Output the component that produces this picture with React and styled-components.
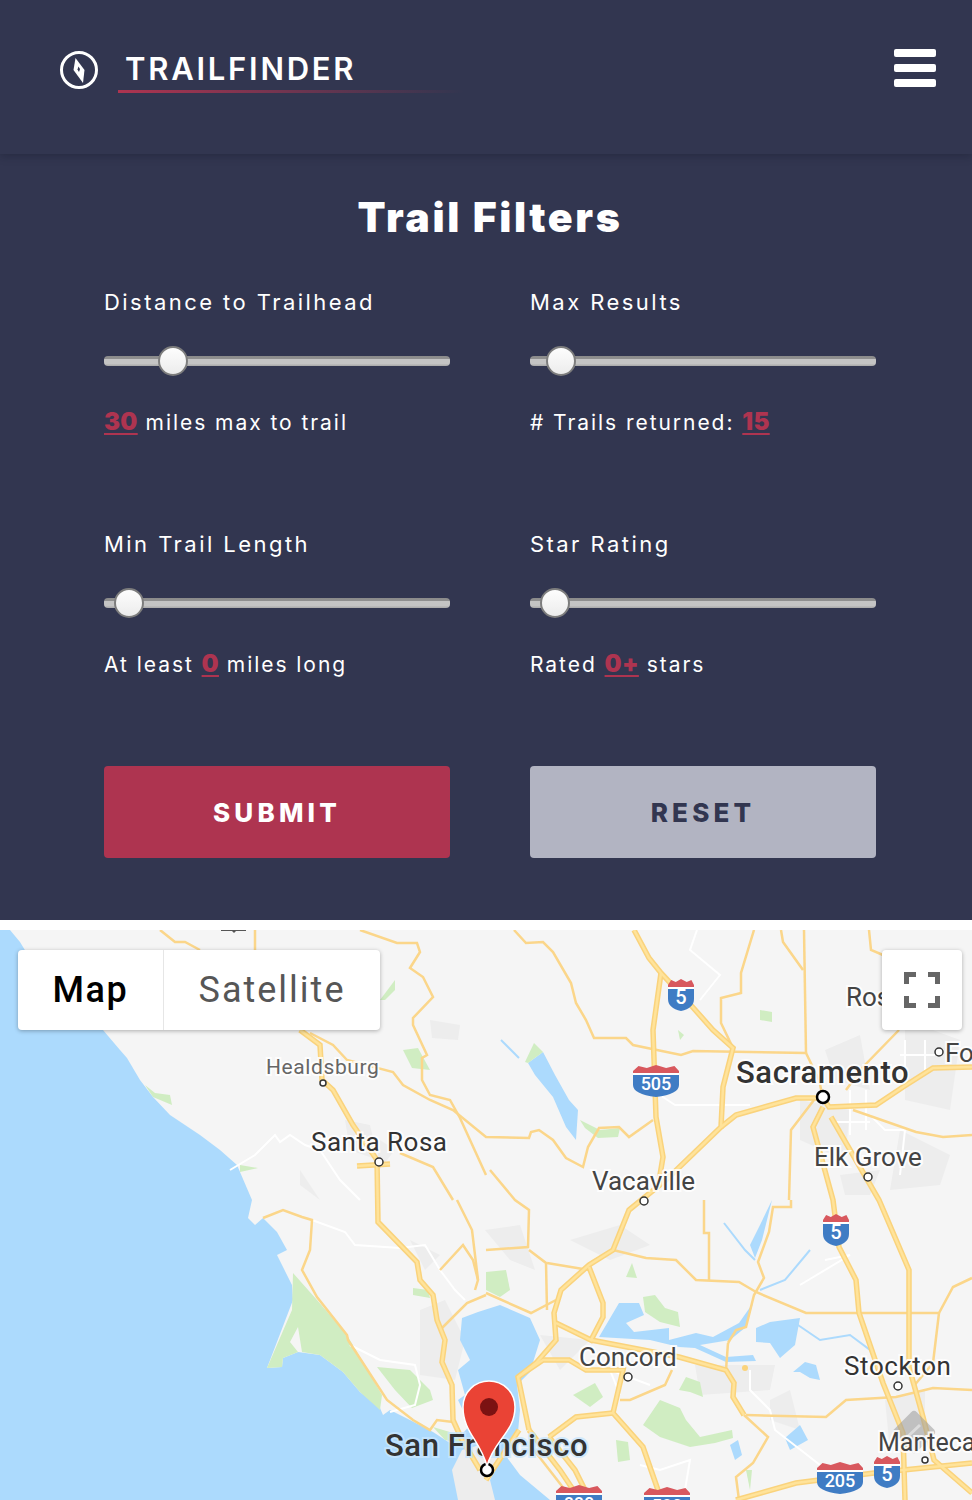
import React from 'react'
import styled, {createGlobalStyle} from 'styled-components'

const GlobalStyle = createGlobalStyle`
  * { box-sizing: border-box; }
  html, body { margin: 0; background: #fff; }
  body { font-family: Inter, "Liberation Sans", sans-serif; }
`

const Page = styled.div`
  width: 972px;
  height: 1500px;
  overflow: hidden;
  background: #fff;
`

const Header = styled.header`
  position: relative;
  z-index: 1;
  height: 154px;
  padding: 49px 36px 0 59px;
  display: flex;
  justify-content: space-between;
  align-items: flex-start;
  background: #323650;
  box-shadow: 0 2px 8px rgba(20, 22, 40, 0.35);
`

const Brand = styled.div`
  display: flex;
  align-items: flex-start;
`

const Compass = styled.svg`
  width: 40px;
  height: 40px;
  margin-right: 19px;
  flex: none;
`

const BrandText = styled.div`
  width: 345px;
  height: 44px;
  padding: 0 0 0 7px;
  border-bottom: 3px solid;
  border-image: linear-gradient(90deg, #ae3450, rgba(174, 52, 80, 0)) 1;
  color: #fff;
  font-size: 31px;
  font-weight: 600;
  line-height: 40px;
  letter-spacing: 2.75px;
`

const Burger = styled.div`
  display: flex;
  flex-direction: column;
  gap: 7.5px;
  width: 42px;
`

const BurgerBar = styled.span`
  display: block;
  height: 7.5px;
  border-radius: 2px;
  background: #fff;
`

const Panel = styled.section`
  height: 766px;
  padding: 38px 96px 0 104px;
  background: #323650;
`

const Title = styled.h1`
  margin: 0 0 48px;
  color: #fff;
  font-size: 41px;
  font-weight: 900;
  line-height: 50px;
  letter-spacing: 2.6px;
  text-align: center;
`

const FilterGrid = styled.div`
  display: grid;
  grid-template-columns: 346px 346px;
  column-gap: 80px;
  row-gap: 92px;
`

const Filter = styled.div`
  display: flex;
  flex-direction: column;
  height: 150px;
`

const Label = styled.div`
  color: #fff;
  font-size: 22px;
  font-weight: 400;
  line-height: 24px;
  letter-spacing: 2.45px;
`

const Slider = styled.input`
  -webkit-appearance: none;
  appearance: none;
  display: block;
  width: 346px;
  height: 30px;
  margin: 32px 0 0;
  background: transparent;

  &::-webkit-slider-runnable-track {
    height: 10px;
    border-radius: 4px;
    background: linear-gradient(#8b8b8b 0, #8f8f8f 25%, #c4c4c4 30%, #c4c4c4 75%, #a8a8a8 100%);
  }

  &::-webkit-slider-thumb {
    -webkit-appearance: none;
    width: 30px;
    height: 30px;
    margin-top: -10px;
    border: 2px solid #7d7d7d;
    border-radius: 50%;
    background: linear-gradient(#fdfdfd, #ececec);
  }
`

const Readout = styled.div`
  margin-top: 33px;
  color: #fff;
  font-size: 21px;
  line-height: 26px;
  letter-spacing: 1.95px;
  white-space: pre;
`

const Value = styled.span`
  color: #ae3450;
  font-size: 24px;
  font-weight: 900;
  letter-spacing: 0.3px;
  text-decoration: underline;
  text-decoration-thickness: 2px;
  text-underline-offset: 3px;
`

const Actions = styled.div`
  display: grid;
  grid-template-columns: 346px 346px;
  column-gap: 80px;
  margin-top: 84px;
`

const Button = styled.button`
  height: 92px;
  border: 0;
  border-radius: 4px;
  background: ${p => (p.$primary ? '#ae3450' : '#b2b4c2')};
  color: ${p => (p.$primary ? '#fff' : '#323650')};
  font-family: Inter, "Liberation Sans", sans-serif;
  font-size: 26px;
  font-weight: 800;
  letter-spacing: 4.2px;
`

const MapFrame = styled.div`
  position: relative;
  height: 570px;
  margin-top: 10px;
  overflow: hidden;
`

const MapCanvas = styled.svg`
  display: block;
  width: 972px;
  height: 570px;
`

const MapTypes = styled.div`
  position: absolute;
  top: 20px;
  left: 18px;
  display: flex;
  height: 80px;
  border-radius: 4px;
  background: #fff;
  box-shadow: 0 1px 4px rgba(0, 0, 0, 0.3);
`

const MapType = styled.div`
  display: flex;
  align-items: center;
  justify-content: center;
  width: ${p => p.$width}px;
  border-left: ${p => (p.$active ? '0' : '1px solid #e6e6e6')};
  color: ${p => (p.$active ? '#000' : '#565656')};
  font-family: Roboto, "Liberation Sans", sans-serif;
  font-size: 36px;
  font-weight: ${p => (p.$active ? 500 : 400)};
  letter-spacing: ${p => (p.$active ? 1.6 : 2)}px;
`

const Fullscreen = styled.div`
  position: absolute;
  top: 20px;
  right: 10px;
  display: flex;
  align-items: center;
  justify-content: center;
  width: 80px;
  height: 80px;
  border-radius: 4px;
  background: #fff;
  box-shadow: 0 1px 4px rgba(0, 0, 0, 0.3);
`

const PlaceLabel = styled.text`
  font-family: Roboto, "Liberation Sans", sans-serif;
  font-size: ${p => p.$size}px;
  font-weight: ${p => p.$weight || 400};
  letter-spacing: ${p => p.$spacing || 0}px;
  fill: ${p => p.$color || '#444'};
  stroke: ${p => p.$halo || 'rgba(255, 255, 255, 0.85)'};
  stroke-width: 4px;
  paint-order: stroke;
`

const ShieldNumber = styled.text`
  font-family: Roboto, "Liberation Sans", sans-serif;
  font-size: ${p => p.$size}px;
  font-weight: 500;
  fill: #fff;
  text-anchor: middle;
`

const filters = [
  {label: 'Distance to Trailhead', position: 171, text: [['value', '30'], ['text', ' miles max to trail']]},
  {label: 'Max Results', position: 50, text: [['text', '# Trails returned: '], ['value', '15']]},
  {label: 'Min Trail Length', position: 32, text: [['text', 'At least '], ['value', '0'], ['text', ' miles long']]},
  {label: 'Star Rating', position: 32, text: [['text', 'Rated '], ['value', '0+'], ['text', ' stars']]},
]

const water = [
  '0,930 10,930 20,942 40,975 103,1030 120,1050 127,1058 140,1080 153,1097 170,1115 200,1135 220,1150 237,1165 240,1172 252,1200 248,1218 255,1225 263,1218 277,1232 287,1250 277,1255 292,1285 293,1300 267,1368 282,1367 283,1358 298,1352 320,1355 343,1372 360,1392 380,1408 383,1415 390,1410 410,1420 433,1432 453,1445 470,1425 458,1400 465,1395 458,1370 470,1360 460,1340 462,1318 478,1312 500,1305 530,1318 540,1340 530,1372 517,1385 520,1410 518,1432 503,1452 520,1475 550,1500 0,1500',
  '599,1337 619,1303 639,1303 644,1315 626,1323 634,1332 669,1328 669,1340 696,1333 713,1337 739,1323 753,1303 746,1327 730,1340 700,1345 726,1357 753,1355 756,1361 726,1362 695,1348 679,1347 650,1340',
  '756,1328 770,1322 800,1318 795,1345 780,1358 770,1343 756,1342',
  '772,1200 762,1240 755,1258 750,1245 760,1225',
  '543,1052 528,1063 535,1075 553,1097 566,1127 576,1140 578,1110 569,1100 555,1075',
  '793,1372 805,1362 816,1365 820,1380 810,1378 800,1372',
  '785,1438 800,1425 808,1440 790,1450',
  '730,1445 738,1440 742,1455 735,1460',
]

const waterLines = [
  '724,1223 745,1250 755,1260',
  '810,1250 785,1280 760,1290',
  '795,1323 820,1340 850,1335 870,1350 880,1375',
  '501,1040 519,1058',
]

const green = [
  '293,1273 317,1300 347,1335 382,1395 380,1410 360,1392 343,1372 320,1355 302,1352 298,1327 290,1342 298,1352 283,1358 282,1367 267,1368 292,1310',
  '145,1085 153,1097 172,1105 170,1095 155,1093',
  '240,1165 258,1168 240,1172',
  '380,1000 395,980 395,990 385,1000',
  '403,1050 418,1048 430,1070 412,1068',
  '377,1367 410,1370 430,1390 433,1400 412,1408 395,1390',
  '433,1427 460,1435 467,1445 445,1440',
  '486,1272 506,1270 510,1290 500,1297 486,1290',
  '413,1288 428,1290 430,1298 413,1295',
  '643,1297 655,1295 665,1308 678,1312 680,1327 660,1322 645,1312',
  '626,1277 632,1263 637,1278',
  '573,1395 595,1383 603,1397 590,1407',
  '679,1390 686,1377 700,1382 703,1397 690,1392',
  '643,1425 660,1400 680,1408 686,1420 700,1437 732,1430 733,1438 715,1443 690,1447 660,1437',
  '616,1440 628,1442 630,1460 618,1462',
  '760,1010 772,1012 772,1022 760,1020',
  '534,1043 543,1052 528,1063 525,1062',
  '580,1120 600,1130 620,1128 618,1137 598,1138 585,1128',
  '746,1470 752,1470 750,1490',
  '680,1040 678,1030 684,1035',
]

const gray = [
  '430,1020 460,1025 458,1040 432,1038',
  '345,1120 370,1125 378,1160 350,1150',
  '300,1170 320,1200 300,1185',
  '380,1140 395,1150 375,1175',
  '420,1310 445,1300 465,1340 455,1380 420,1375',
  '410,1240 440,1255 425,1270',
  '485,1230 520,1225 535,1270 510,1260',
  '570,1240 620,1225 650,1245 610,1260',
  '540,1335 590,1340 560,1370',
  '695,1365 775,1365 770,1390 700,1395',
  '825,1050 860,1035 870,1090 835,1080',
  '800,1100 850,1110 845,1160 800,1140',
  '905,1020 960,1040 950,1110 905,1100',
  '900,1130 950,1155 940,1185 890,1190',
  '840,1175 880,1170 870,1195 845,1195',
  '770,1400 790,1390 800,1430 770,1420',
  '885,1400 925,1390 925,1440 890,1450',
]

const highways = [
  '300,1030 320,1045 322,1080 333,1090 353,1125 377,1160 378,1222 417,1262 420,1280 433,1295 437,1320 445,1340 442,1362 452,1385 453,1420 462,1440 480,1470',
  '634,930 649,958 661,973 689,1003 713,1030 733,1048 723,1087 721,1127 666,1180 629,1210 613,1250 589,1265 561,1290 554,1313 556,1340 536,1363 518,1377 529,1430',
  '661,973 653,1030 656,1117 663,1157 658,1187',
  '721,1127 736,1115 796,1098 823,1098 829,1107 876,1105 903,1087 933,1068 972,1067',
  '823,1107 813,1127 833,1200 839,1247 856,1280 859,1313 883,1383 903,1433 905,1500',
  '831,1117 879,1200 909,1270 909,1367 923,1417 934,1460 972,1493',
  '589,1267 603,1303 603,1317 591,1340 556,1323',
  '591,1340 679,1357 726,1370 734,1383 733,1397 744,1415',
  '613,1413 576,1417 549,1437',
  '613,1413 623,1370 586,1370 569,1360 543,1360 518,1377',
  '613,1413 643,1447 659,1493',
  '486,1480 519,1430',
  '736,1500 796,1483 874,1473 972,1463',
  '529,1430 560,1470 580,1500',
  '357,1166 390,1164',
  '549,1437 575,1470 590,1500',
]

const roads = [
  '160,930 175,942 185,942 200,950',
  '255,930 255,950',
  '360,930 397,943 417,943 420,952 410,968 423,977 433,997 413,1018 413,1025 427,1055 422,1058 422,1080 430,1095 450,1100 460,1118 486,1175',
  '310,1033 333,1045 347,1060 393,1072 403,1085 430,1100 453,1110 486,1137 529,1138 531,1132 539,1130 553,1140 566,1158 583,1167 588,1147 599,1128 619,1127 629,1137 653,1120',
  '514,930 526,943 543,942 553,952 571,983 576,1003 586,1020 594,1038 626,1038 633,1045 681,1055 693,1051 806,1053 819,1080 823,1098',
  '804,930 806,1053',
  '781,930 783,942 803,970',
  '754,930 741,973 741,993 721,998 721,1023 733,1048',
  '789,1200 791,1130 814,1100',
  '853,1110 916,1132 943,1137 972,1135',
  '899,1030 863,1067 846,1090',
  '869,930 871,950 883,955',
  '613,1250 646,1258 676,1260 696,1280 739,1282 756,1292 806,1313 939,1313 953,1287 972,1278',
  '728,1343 736,1330 746,1327 754,1295 764,1278 758,1262 769,1232 773,1207 791,1207 791,1200',
  '728,1343 726,1370',
  '744,1415 768,1437 753,1463 736,1477 739,1500',
  '972,1390 933,1388 896,1397 846,1400 826,1417 746,1415',
  '913,1387 933,1363 939,1313',
  '486,1293 531,1313 556,1300',
  '486,1250 528,1247 529,1210 515,1200 490,1170',
  '529,1250 546,1263 547,1310',
  '547,1263 589,1270',
  '704,1200 704,1233 709,1233 709,1280',
  '263,1218 283,1210 302,1217 312,1220 310,1250 302,1270 317,1297 347,1335 348,1340 387,1400 413,1420 430,1430 437,1420 453,1422',
  '457,1200 472,1230 478,1280 475,1290',
  '442,1328 467,1303 486,1295',
  '440,1270 463,1245 473,1260 478,1280',
  '400,1153 433,1167 453,1200',
  '672,1370 665,1385 630,1400 620,1400',
  '530,1445 565,1490',
]

const whiteRoads = [
  '230,1170 255,1155 275,1135 280,1142 290,1135 305,1145 320,1150 340,1180 360,1200',
  '312,1220 345,1232 355,1245 400,1248 425,1245 440,1270 455,1290 465,1300',
  '350,1345 380,1360 415,1365 420,1385 415,1405 390,1412',
  '700,1000 720,975 690,950 697,930',
  '660,1095 675,1105 750,1105',
  '750,1370 750,1390 770,1410 775,1430 820,1465',
  '825,1260 850,1255 800,1285',
  '870,1115 885,1130 905,1130 900,1175',
  '650,1385 610,1370 620,1395',
  '640,1465 660,1470 690,1460 685,1490',
  '850,1090 850,1135',
  '866,1090 866,1130',
  '835,1122 870,1122',
  '900,1055 935,1055',
  '905,1040 905,1070',
  '925,1040 925,1070',
]

const Shield = ({x, y, width, label}) => {
  const h = 32
  const half = width / 2
  return (
    <g transform={`translate(${x - half} ${y - 16})`}>
      <path
        d={`M0 6 L${width * 0.12} 1 L${width * 0.3} 3 L${half} 0 L${width * 0.72} 3 L${width * 0.9} 1 L${width} 6 L${width} 8 L0 8 Z`}
        fill="#d8585e"
      />
      <rect x="0" y="8" width={width} height="2" fill="#fff" />
      <path
        d={`M0 10 L${width} 10 L${width} 20 Q${width} ${h - 3} ${half} ${h} Q0 ${h - 3} 0 20 Z`}
        fill="#3f7cc4"
      />
      <ShieldNumber x={half} y="25" $size={width > 30 ? 18 : 20}>{label}</ShieldNumber>
    </g>
  )
}

const Ring = ({x, y, r = 4, width = 1.5, color = '#333'}) => (
  <circle cx={x} cy={y} r={r} fill="#fff" stroke={color} strokeWidth={width} />
)

const MapDrawing = () => (
  <MapCanvas viewBox="0 930 972 570">
    <rect x="0" y="930" width="972" height="570" fill="#f5f5f5" />
    {gray.map(p => <polygon key={p} points={p} fill="#ededed" />)}
    {water.map(p => <polygon key={p} points={p} fill="#acdafd" />)}
    <polygon points="452,1470 462,1450 480,1445 500,1460 490,1480 495,1500 458,1500" fill="#ededed" />
    {green.map(p => <polygon key={p} points={p} fill="#d0edc2" />)}
    {waterLines.map(p => <polyline key={p} points={p} fill="none" stroke="#acdafd" strokeWidth="2" />)}
    {whiteRoads.map(p => <polyline key={p} points={p} fill="none" stroke="#fff" strokeWidth="2" />)}
    {roads.map(p => <polyline key={p} points={p} fill="none" stroke="#fbd68a" strokeWidth="2.5" />)}
    {highways.map(p => <polyline key={p} points={p} fill="none" stroke="#fad37c" strokeWidth="5.5" />)}
    {highways.map(p => <polyline key={`${p}-in`} points={p} fill="none" stroke="#ffe39a" strokeWidth="2.5" />)}
    <path d="M221 930 H246 V931 H236 L234 933 L232 931 H221 Z" fill="#555" />

    <Shield x={681} y={995} width={26} label="5" />
    <Shield x={656} y={1081} width={46} label="505" />
    <Shield x={836} y={1230} width={26} label="5" />
    <Shield x={840} y={1478} width={46} label="205" />
    <Shield x={887} y={1472} width={26} label="5" />
    <Shield x={579} y={1501} width={46} label="880" />
    <Shield x={667} y={1503} width={46} label="580" />

    <g transform="translate(914 1432) rotate(45)" opacity="0.55">
      <rect x="-16" y="-16" width="32" height="32" rx="4" fill="#9a9a9a" />
    </g>
    <path d="M904 1440 L920 1425" stroke="#f0f0f0" strokeWidth="3" opacity="0.6" />

    <PlaceLabel x="266" y="1074" $size={21} $spacing={0.6} $color="#666">Healdsburg</PlaceLabel>
    <Ring x={323} y={1083} r={3} />
    <PlaceLabel x="311" y="1151" $size={26} $spacing={0.5} $color="#333">Santa Rosa</PlaceLabel>
    <Ring x={379} y={1162} />
    <PlaceLabel x="846" y="1006" $size={26}>Ros</PlaceLabel>
    <PlaceLabel x="736" y="1083" $size={31} $spacing={0.6} $weight={500} $color="#333">Sacramento</PlaceLabel>
    <Ring x={823} y={1097} r={6} width={2.5} color="#000" />
    <PlaceLabel x="945" y="1062" $size={26}>Fo</PlaceLabel>
    <Ring x={939} y={1052} />
    <PlaceLabel x="814" y="1166" $size={26}>Elk Grove</PlaceLabel>
    <Ring x={868} y={1177} />
    <PlaceLabel x="592" y="1190" $size={26}>Vacaville</PlaceLabel>
    <Ring x={644} y={1201} />
    <PlaceLabel x="579" y="1366" $size={26}>Concord</PlaceLabel>
    <Ring x={628} y={1377} />
    <circle cx="745" cy="1368" r="3" fill="#fad37c" />
    <PlaceLabel x="844" y="1375" $size={26} $spacing={0.6} $color="#333">Stockton</PlaceLabel>
    <Ring x={898} y={1386} />
    <PlaceLabel x="878" y="1451" $size={25}>Manteca</PlaceLabel>
    <Ring x={925} y={1460} r={3} />
    <PlaceLabel x="385" y="1456" $size={31} $spacing={0.6} $weight={500} $color="#333" $halo="rgba(200, 230, 255, 0.8)">San Francisco</PlaceLabel>

    <Ring x={487} y={1470} r={6} width={2.5} color="#000" />
    <path
      d="M487 1466 C480 1440 463 1432 463 1407 C463 1392 475 1381 489 1381 C503 1381 515 1392 515 1407 C515 1432 494 1440 487 1466 Z"
      fill="#ea4335"
      stroke="#fff"
      strokeWidth="1.5"
    />
    <circle cx="489" cy="1407" r="9" fill="#7b1212" />
  </MapCanvas>
)

const App = () => (
  <Page>
    <GlobalStyle />
    <Header>
      <Brand>
        <Compass viewBox="0 0 40 40">
          <circle cx="20" cy="21" r="17.5" fill="none" stroke="#fff" strokeWidth="3" />
          <path d="M16.5 9 L25.5 21 L24 34 L14.5 21 Z" fill="#fff" />
          <path d="M19.5 17.5 L21 20 L20 23 L18.5 20.5 Z" fill="#323650" />
        </Compass>
        <BrandText>TRAILFINDER</BrandText>
      </Brand>
      <Burger>
        <BurgerBar />
        <BurgerBar />
        <BurgerBar />
      </Burger>
    </Header>
    <Panel>
      <Title>Trail Filters</Title>
      <FilterGrid>
        {filters.map(f => (
          <Filter key={f.label}>
            <Label>{f.label}</Label>
            <Slider type="range" min="0" max="1000" defaultValue={f.position} />
            <Readout>
              {f.text.map(([kind, t]) => (kind === 'value' ? <Value key={t}>{t}</Value> : t))}
            </Readout>
          </Filter>
        ))}
      </FilterGrid>
      <Actions>
        <Button $primary>SUBMIT</Button>
        <Button>RESET</Button>
      </Actions>
    </Panel>
    <MapFrame>
      <MapDrawing />
      <MapTypes>
        <MapType $active $width={145}>Map</MapType>
        <MapType $width={217}>Satellite</MapType>
      </MapTypes>
      <Fullscreen>
        <svg width="36" height="36" viewBox="0 0 36 36">
          <path d="M2.5 12 V2.5 H12 M24 2.5 H33.5 V12 M33.5 24 V33.5 H24 M12 33.5 H2.5 V24" fill="none" stroke="#666" strokeWidth="5" />
        </svg>
      </Fullscreen>
    </MapFrame>
  </Page>
)

export default App
